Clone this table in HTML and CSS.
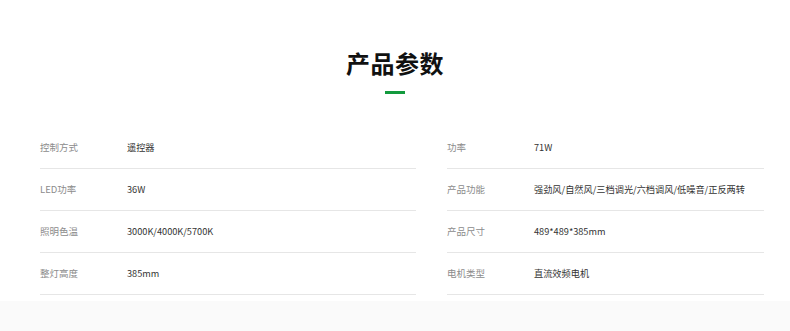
FILE: index.html
```html
<!DOCTYPE html>
<html lang="zh-CN">
<head>
<meta charset="utf-8">
<link rel="stylesheet" href="styles.css">
</head>
<body>
<section class="params">
  <h2 class="title">产品参数</h2>
  <div class="bar"></div>
  <div class="grid">
    <div class="col col-left">
      <div class="row"><span class="label">控制方式</span><span class="value">遥控器</span></div>
      <div class="row"><span class="label">LED功率</span><span class="value">36W</span></div>
      <div class="row"><span class="label">照明色温</span><span class="value">3000K/4000K/5700K</span></div>
      <div class="row"><span class="label">整灯高度</span><span class="value">385mm</span></div>
    </div>
    <div class="col col-right">
      <div class="row"><span class="label">功率</span><span class="value">71W</span></div>
      <div class="row"><span class="label">产品功能</span><span class="value">强劲风/自然风/三档调光/六档调风/低噪音/正反两转</span></div>
      <div class="row"><span class="label">产品尺寸</span><span class="value">489*489*385mm</span></div>
      <div class="row"><span class="label">电机类型</span><span class="value">直流效频电机</span></div>
    </div>
  </div>
</section>
</body>
</html>
```

FILE: styles.css
```css
html, body {
  margin: 0;
  padding: 0;
}
body {
  background: #fafafa;
  font-family: "Noto Sans CJK SC", "Noto Sans", sans-serif;
  height: 331px;
  overflow: hidden;
}
.params {
  background: #fff;
  padding-top: 48px;
  padding-bottom: 6px;
  display: flex;
  flex-direction: column;
  align-items: center;
}
.title {
  margin: 0;
  font-size: 24px;
  line-height: 30px;
  font-weight: 700;
  color: #111;
  letter-spacing: 0.5px;
}
.bar {
  width: 20px;
  height: 3px;
  background: #139a3e;
  margin-top: 13px;
}
.grid {
  align-self: stretch;
  display: grid;
  grid-template-columns: 376px 317px;
  column-gap: 31px;
  padding-left: 40px;
  margin-top: 33px;
}
.row {
  height: 40px;
  padding-bottom: 1px;
  border-bottom: 1px solid #e6e6e6;
  display: flex;
  align-items: center;
  font-size: 9.5px;
}
.label {
  width: 87px;
  flex: none;
  color: #8c8c8c;
}
.value {
  color: #333;
  font-size: 9.2px;
}
```
